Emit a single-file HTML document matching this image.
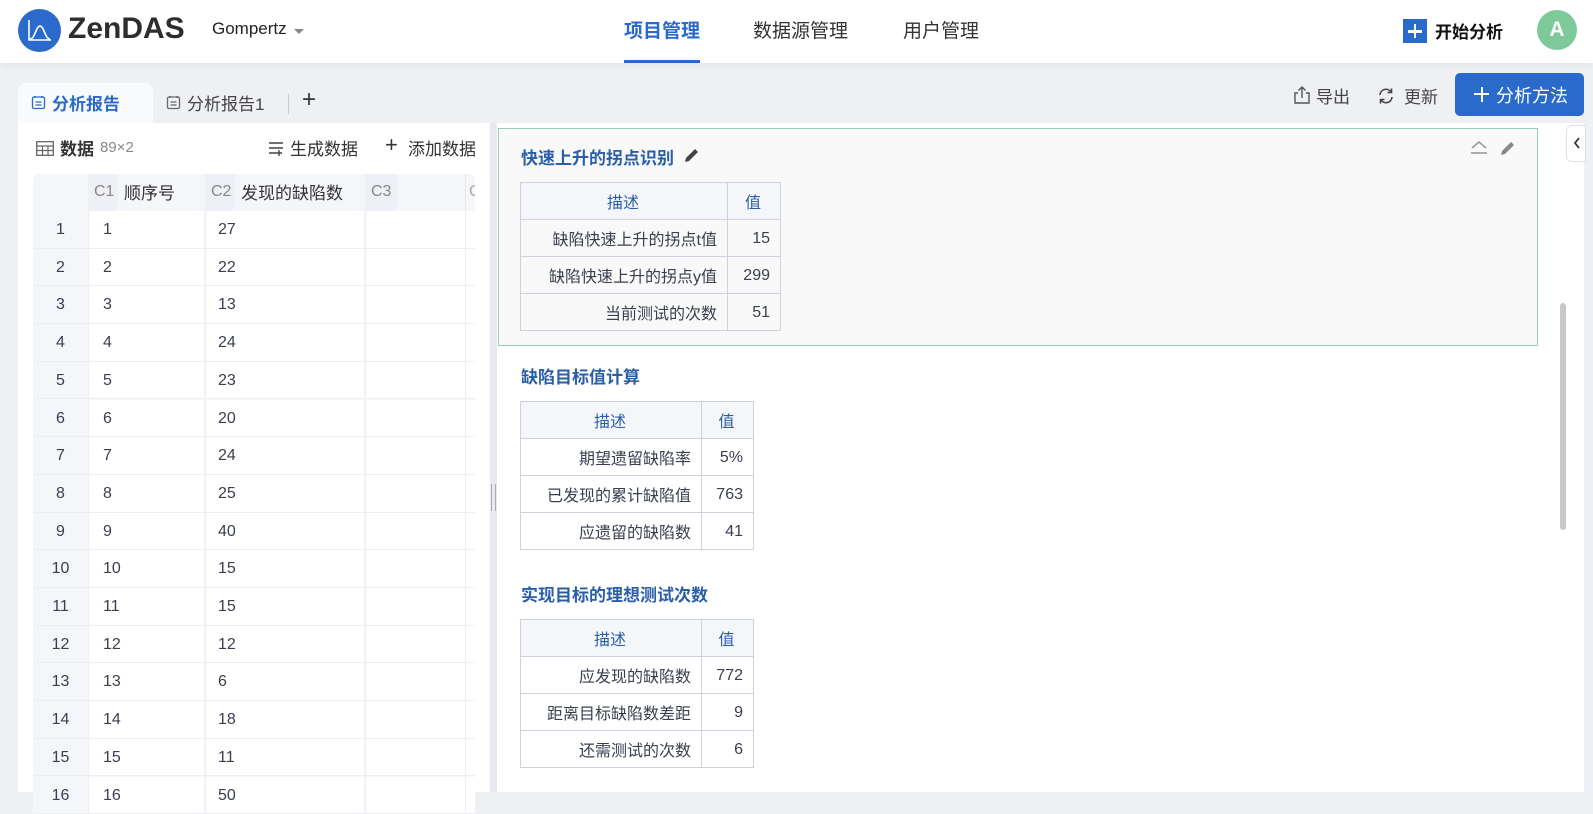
<!DOCTYPE html>
<html><head><meta charset="utf-8">
<style>
*{margin:0;padding:0;box-sizing:border-box}
body{width:1593px;height:792px;overflow:hidden;background:#eef0f4;font-family:"Liberation Sans","Noto Sans CJK SC",sans-serif;color:#333;position:relative}
.a{position:absolute;white-space:nowrap}
#hdr{position:absolute;left:0;top:0;width:1593px;height:63px;background:#fff;box-shadow:0 2px 8px rgba(0,0,0,.06)}
.nav{font-size:19px;top:16px;color:#333}
.grid{position:absolute;left:33px;top:174px;width:442px;height:640px;background:#f5f6fa;border-radius:6px 6px 0 0;overflow:hidden}
.row{position:absolute;left:0;width:442px;height:37.7px;font-size:16px;color:#3a3f4f}
.row div{position:absolute;top:0;height:37.7px;line-height:38px;border-bottom:1px solid #eceef2}
.c0{left:0;width:55px;text-align:center;background:#f5f6fa}
.c1{left:55px;width:116px;background:#fff;border-left:1px solid #eceef2;padding-left:14px}
.c2{left:172px;width:159px;background:#fff;border-left:1px solid #eceef2;padding-left:12px}
.c3{left:332px;width:100px;background:#fff;border-left:1px solid #eceef2}
.c4{left:432px;width:10px;background:#fff;border-left:1px solid #eceef2}
table{position:absolute;border-collapse:collapse;font-size:16px;color:#3a3f4f}
td,th{border:1.5px solid #cdd2de;height:37px;text-align:right;padding:0 10px 0 8px;font-weight:normal}
td:last-child{padding-top:1px}
th{background:#f4f6fa;color:#2a5fa8;text-align:center}
.ttl{font-size:17px;font-weight:bold;color:#2a5fa8}
</style></head><body>
<div id="hdr">
  <svg class="a" style="left:18px;top:9px" width="43" height="43" viewBox="0 0 43 43"><circle cx="21.5" cy="21.5" r="21.5" fill="#2a6acb"/><path d="M11 11v20h22" stroke="#fff" stroke-width="1.6" fill="none"/><path d="M12 30c5 0 6-13 10-13s5 13 10 13" stroke="#fff" stroke-width="1.6" fill="none"/></svg>
  <div class="a" style="left:68px;top:12px;font-size:30px;font-weight:bold;color:#2d2d2d">ZenDAS</div>
  <div class="a" style="left:212px;top:19px;font-size:17px;color:#222">Gompertz</div>
  <div class="a" style="left:294px;top:29px;width:0;height:0;border-left:5px solid transparent;border-right:5px solid transparent;border-top:5px solid #888"></div>
  <div class="a nav" style="left:624px;color:#2a6acb;font-weight:bold">项目管理</div>
  <div class="a" style="left:624px;top:60px;width:76px;height:3px;background:#2a6acb"></div>
  <div class="a nav" style="left:753px">数据源管理</div>
  <div class="a nav" style="left:903px">用户管理</div>
  <div class="a" style="left:1403px;top:19px;width:24px;height:24px;background:#2a6acb"></div>
  <div class="a" style="left:1408px;top:30px;width:14px;height:2.5px;background:#fff"></div>
  <div class="a" style="left:1413.7px;top:24px;width:2.5px;height:14px;background:#fff"></div>
  <div class="a" style="left:1435px;top:18px;font-size:17px;font-weight:bold;color:#111">开始分析</div>
  <div class="a" style="left:1537px;top:10px;width:40px;height:40px;border-radius:50%;background:#7ec99a;color:#fff;font-size:21px;font-weight:bold;text-align:center;line-height:40px">A</div>
</div>

<div class="a" style="left:18px;top:83px;width:135px;height:40px;background:#f9fafc;border-radius:8px 8px 0 0"></div>
<svg class="a" style="left:31px;top:95px" width="15" height="15" viewBox="0 0 15 15"><rect x="1.5" y="2" width="12" height="11.5" rx="1.5" stroke="#2a6acb" stroke-width="1.3" fill="none"/><path d="M4 1v2M11 1v2M4.5 7h6M4.5 10h6" stroke="#2a6acb" stroke-width="1.3"/></svg>
<div class="a" style="left:52px;top:90px;font-size:17px;font-weight:bold;color:#2a6acb">分析报告</div>
<svg class="a" style="left:166px;top:95px" width="15" height="15" viewBox="0 0 15 15"><rect x="1.5" y="2" width="12" height="11.5" rx="1.5" stroke="#666" stroke-width="1.3" fill="none"/><path d="M4 1v2M11 1v2M4.5 7h6M4.5 10h6" stroke="#666" stroke-width="1.3"/></svg>
<div class="a" style="left:187px;top:90px;font-size:17px;color:#444">分析报告1</div>
<div class="a" style="left:288px;top:94px;width:1px;height:20px;background:#ccc"></div>
<div class="a" style="left:302px;top:86px;font-size:24px;color:#333">+</div>

<svg class="a" style="left:1292px;top:85px" width="20" height="20" viewBox="0 0 20 20"><path d="M6 8H3v10h14V8h-3M10 13V2M6.5 5.5L10 2l3.5 3.5" stroke="#555" stroke-width="1.4" fill="none"/></svg>
<div class="a" style="left:1316px;top:83px;font-size:17px;color:#444">导出</div>
<svg class="a" style="left:1377px;top:87px" width="18" height="18" viewBox="0 0 18 18"><path d="M3 8a6 6 0 0 1 11-3M15 10a6 6 0 0 1-11 3" stroke="#444" stroke-width="1.6" fill="none"/><path d="M14.5 1.5v4h-4M3.5 16.5v-4h4" stroke="#444" stroke-width="1.6" fill="none"/></svg>
<div class="a" style="left:1404px;top:83px;font-size:17px;color:#444">更新</div>
<div class="a" style="left:1455px;top:73px;width:129px;height:43px;background:#2a6acb;border-radius:5px"></div>
<div class="a" style="left:1474px;top:93px;width:15px;height:2px;background:#fff"></div>
<div class="a" style="left:1480.5px;top:86.5px;width:2px;height:15px;background:#fff"></div>
<div class="a" style="left:1496px;top:82px;font-size:18px;color:#fff">分析方法</div>

<div class="a" style="left:18px;top:123px;width:472px;height:669px;background:#fff"></div>
<svg class="a" style="left:36px;top:141px" width="18" height="15" viewBox="0 0 18 15"><rect x="0.7" y="0.7" width="16.6" height="13.6" stroke="#666" stroke-width="1.3" fill="none"/><path d="M1 5h16M1 9.5h16M6.5 5v9.5M12 5v9.5" stroke="#666" stroke-width="1.2"/></svg>
<div class="a" style="left:60px;top:135px;font-size:17px;font-weight:bold;color:#333">数据</div>
<div class="a" style="left:100px;top:139px;font-size:15px;color:#888">89×2</div>
<svg class="a" style="left:268px;top:141px" width="16" height="15" viewBox="0 0 16 15"><path d="M1 2h14M1 7h14M1 12h7M11 9v6M8 12h6" stroke="#444" stroke-width="1.4"/></svg>
<div class="a" style="left:290px;top:135px;font-size:17px;color:#333">生成数据</div>
<div class="a" style="left:385px;top:132px;font-size:22px;color:#333">+</div>
<div class="a" style="left:408px;top:135px;font-size:17px;color:#333">添加数据</div>

<div class="grid">
  <div class="a" style="left:55px;top:0;width:30px;height:37px;background:#eef0f5;border-radius:0 0 6px 0"></div>
  <div class="a" style="left:61px;top:9px;font-size:16px;color:#888">C1</div>
  <div class="a" style="left:91px;top:5px;font-size:17px;color:#333">顺序号</div>
  <div class="a" style="left:172px;top:0;width:30px;height:37px;background:#eef0f5;border-radius:0 0 6px 0"></div>
  <div class="a" style="left:178px;top:9px;font-size:16px;color:#888">C2</div>
  <div class="a" style="left:208px;top:5px;font-size:17px;color:#333">发现的缺陷数</div>
  <div class="a" style="left:332px;top:0;width:32px;height:37px;background:#eef0f5;border-radius:0 0 6px 0"></div>
  <div class="a" style="left:338px;top:9px;font-size:16px;color:#888">C3</div>
  <div class="a" style="left:432px;top:0;width:1px;height:37px;background:#e6e8ee"></div>
  <div class="a" style="left:436px;top:9px;font-size:16px;color:#aaa">C</div>
  <div class="row" style="top:37px"><div class="c0">1</div><div class="c1">1</div><div class="c2">27</div><div class="c3"></div><div class="c4"></div></div>
  <div class="row" style="top:74.7px"><div class="c0">2</div><div class="c1">2</div><div class="c2">22</div><div class="c3"></div><div class="c4"></div></div>
  <div class="row" style="top:112.4px"><div class="c0">3</div><div class="c1">3</div><div class="c2">13</div><div class="c3"></div><div class="c4"></div></div>
  <div class="row" style="top:150.1px"><div class="c0">4</div><div class="c1">4</div><div class="c2">24</div><div class="c3"></div><div class="c4"></div></div>
  <div class="row" style="top:187.8px"><div class="c0">5</div><div class="c1">5</div><div class="c2">23</div><div class="c3"></div><div class="c4"></div></div>
  <div class="row" style="top:225.5px"><div class="c0">6</div><div class="c1">6</div><div class="c2">20</div><div class="c3"></div><div class="c4"></div></div>
  <div class="row" style="top:263.2px"><div class="c0">7</div><div class="c1">7</div><div class="c2">24</div><div class="c3"></div><div class="c4"></div></div>
  <div class="row" style="top:300.9px"><div class="c0">8</div><div class="c1">8</div><div class="c2">25</div><div class="c3"></div><div class="c4"></div></div>
  <div class="row" style="top:338.6px"><div class="c0">9</div><div class="c1">9</div><div class="c2">40</div><div class="c3"></div><div class="c4"></div></div>
  <div class="row" style="top:376.3px"><div class="c0">10</div><div class="c1">10</div><div class="c2">15</div><div class="c3"></div><div class="c4"></div></div>
  <div class="row" style="top:414px"><div class="c0">11</div><div class="c1">11</div><div class="c2">15</div><div class="c3"></div><div class="c4"></div></div>
  <div class="row" style="top:451.7px"><div class="c0">12</div><div class="c1">12</div><div class="c2">12</div><div class="c3"></div><div class="c4"></div></div>
  <div class="row" style="top:489.4px"><div class="c0">13</div><div class="c1">13</div><div class="c2">6</div><div class="c3"></div><div class="c4"></div></div>
  <div class="row" style="top:527.1px"><div class="c0">14</div><div class="c1">14</div><div class="c2">18</div><div class="c3"></div><div class="c4"></div></div>
  <div class="row" style="top:564.8px"><div class="c0">15</div><div class="c1">15</div><div class="c2">11</div><div class="c3"></div><div class="c4"></div></div>
  <div class="row" style="top:602.5px"><div class="c0">16</div><div class="c1">16</div><div class="c2">50</div><div class="c3"></div><div class="c4"></div></div>
</div>

<div class="a" style="left:490px;top:123px;width:7px;height:669px;background:#e8e9ee"></div>
<div class="a" style="left:491px;top:484px;width:1px;height:27px;background:#aaa"></div>
<div class="a" style="left:495px;top:484px;width:1px;height:27px;background:#aaa"></div>

<div class="a" style="left:497px;top:123px;width:1087px;height:669px;background:#fff"></div>
<div class="a" style="left:1584px;top:123px;width:9px;height:669px;background:#eef0f5"></div>
<div class="a" style="left:498px;top:128px;width:1040px;height:218px;background:#f9f9f9;border:1.3px solid #98cbbf"></div>
<div class="a ttl" style="left:521px;top:144px">快速上升的拐点识别</div>
<svg class="a" style="left:683px;top:147px" width="17" height="17" viewBox="0 0 17 17"><path d="M2 15l1-4L12 2l3 3-9 9z" fill="#444"/></svg>
<svg class="a" style="left:1470px;top:140px" width="18" height="14" viewBox="0 0 18 14"><path d="M2 8l7-6 7 6" stroke="#999" stroke-width="1.5" fill="none"/><path d="M1 13h16" stroke="#999" stroke-width="1.6"/></svg>
<svg class="a" style="left:1500px;top:140px" width="16" height="16" viewBox="0 0 16 16"><path d="M1 15l1-4L11 2l3 3-9 9z" fill="#888"/></svg>
<div class="a" style="left:1566px;top:125px;width:20px;height:37px;background:#fff;border:1px solid #dcdfe6;border-radius:6px 0 0 6px"></div>
<svg class="a" style="left:1573px;top:137px" width="8" height="12" viewBox="0 0 8 12"><path d="M6 1L2 6l4 5" stroke="#333" stroke-width="1.8" fill="none"/></svg>
<div class="a" style="left:1560px;top:303px;width:6px;height:227px;background:#c8c8c8;border-radius:3px"></div>

<table style="left:520px;top:182px;width:261px">
<tr><th style="width:207px">描述</th><th>值</th></tr>
<tr><td>缺陷快速上升的拐点t值</td><td>15</td></tr>
<tr><td>缺陷快速上升的拐点y值</td><td>299</td></tr>
<tr><td>当前测试的次数</td><td>51</td></tr>
</table>

<div class="a ttl" style="left:521px;top:363px">缺陷目标值计算</div>
<table style="left:520px;top:401px;width:234px">
<tr><th style="width:181px">描述</th><th>值</th></tr>
<tr><td>期望遗留缺陷率</td><td>5%</td></tr>
<tr><td>已发现的累计缺陷值</td><td>763</td></tr>
<tr><td>应遗留的缺陷数</td><td>41</td></tr>
</table>

<div class="a ttl" style="left:521px;top:581px">实现目标的理想测试次数</div>
<table style="left:520px;top:619px;width:234px">
<tr><th style="width:181px">描述</th><th>值</th></tr>
<tr><td>应发现的缺陷数</td><td>772</td></tr>
<tr><td>距离目标缺陷数差距</td><td>9</td></tr>
<tr><td>还需测试的次数</td><td>6</td></tr>
</table>
</body></html>
